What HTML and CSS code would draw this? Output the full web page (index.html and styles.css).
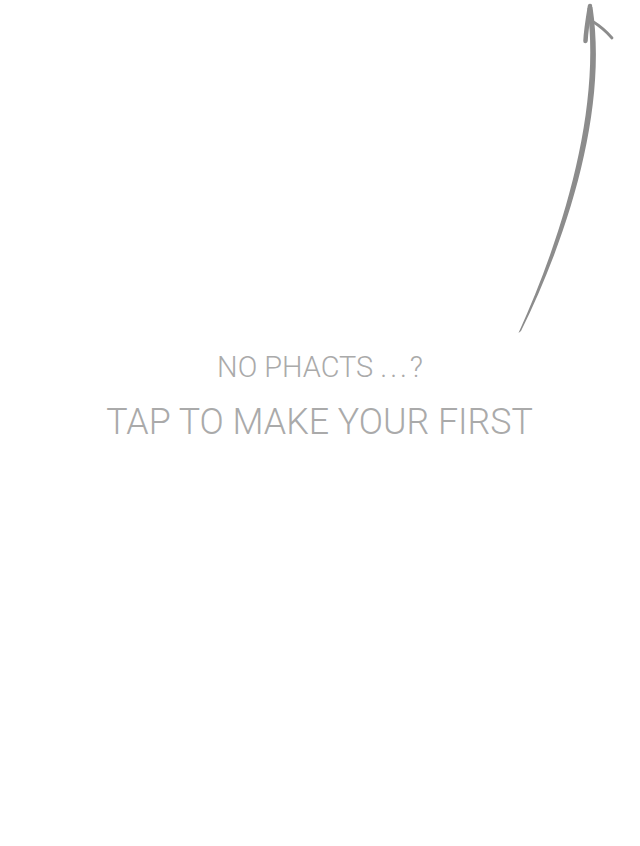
FILE: index.html
```html
<!DOCTYPE html>
<html>
<head>
<meta charset="utf-8">
<link rel="stylesheet" href="styles.css">
</head>
<body>
<div class="screen">
  <svg class="arrow" width="640" height="846" viewBox="0 0 640 846" xmlns="http://www.w3.org/2000/svg">
    <path class="shaft" d="M518.5,333 C563,235 601,110 587.5,8 L592.5,7 C608,110 568,236 521,331 Z"/>
    <path class="stem" d="M590,6 C588,18 586,30 585.5,41"/>
    <path class="barb" d="M592,21 C600,26 606,31 612,38"/>
  </svg>
  <div class="message">
    <div class="line1"><span class="txt">NO PHACTS <span class="dots">...</span>?</span></div>
    <div class="line2"><span class="txt">TAP TO MAKE YOUR FIRST</span></div>
  </div>
</div>
</body>
</html>
```

FILE: styles.css
```css
html, body {
  margin: 0;
  padding: 0;
  background: #ffffff;
}
.screen {
  width: 640px;
  height: 846px;
  position: relative;
  overflow: hidden;
}
.arrow {
  position: absolute;
  left: 0;
  top: 0;
}
.shaft {
  fill: #8c8c8c;
}
.stem {
  fill: none;
  stroke: #8c8c8c;
  stroke-width: 4.5;
  stroke-linecap: round;
}
.barb {
  fill: none;
  stroke: #8c8c8c;
  stroke-width: 2.8;
  stroke-linecap: round;
}
.message {
  display: flex;
  flex-direction: column;
  align-items: center;
  padding-top: 353px;
  gap: 21.6px;
  font-family: Roboto, "Liberation Sans", sans-serif;
  font-weight: 300;
  color: #aaaaaa;
}
.line1, .line2 {
  white-space: nowrap;
}
.txt {
  display: inline-block;
  transform: scaleX(0.98);
  transform-origin: center;
}
.line1 {
  font-size: 29.5px;
  line-height: 29.5px;
}
.dots {
  letter-spacing: 3px;
}
.line2 {
  font-size: 36.5px;
  line-height: 36.5px;
}
```
